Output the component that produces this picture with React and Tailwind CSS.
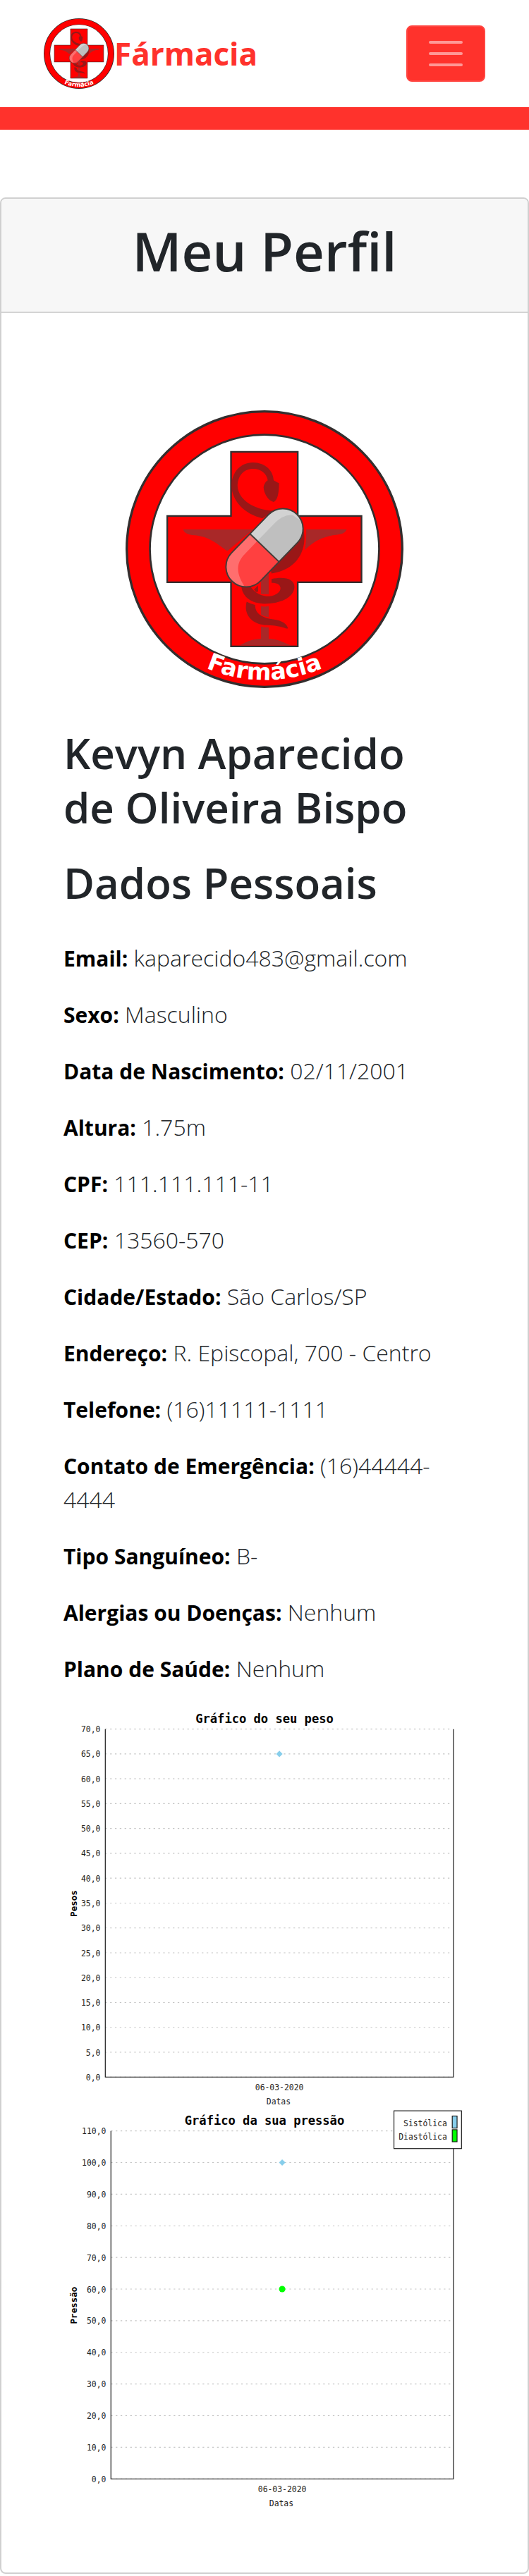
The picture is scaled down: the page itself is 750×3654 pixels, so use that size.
import { useId } from "react";

function Logo({ className }) {
  const id = useId();
  const pill = `${id}-pill`;
  const arc = `${id}-arc`;
  return (
    <svg viewBox="56 67 1186 1186" className={className} role="img" aria-label="Logo da Farmácia">
      <defs>
        <clipPath id={pill}>
          <rect x="-199" y="-86" width="398" height="172" rx="86" />
        </clipPath>
        <path id={arc} d="M330 1133 A640 640 0 0 0 968 1133" />
      </defs>
      <circle cx="649" cy="660" r="539" fill="#fff" stroke="#332e2e" strokeWidth="108" />
      <circle cx="649" cy="660" r="538" fill="none" stroke="#f00" strokeWidth="90" />
      <path
        d="M506 244H791V518H1063V801H791V1075H506V801H234V518H506Z"
        fill="#f00"
        stroke="#332e2e"
        strokeWidth="7"
      />
      <g fill="#a92828">
        <path d="M302 576H600L490 668C440 632 410 604 340 600C318 597 304 588 302 576Z" />
        <path d="M827 576H1000C994 590 980 596 960 598C900 604 860 625 821 664Q828 620 827 576Z" />
        <path d="M634 740H667V852H634ZM634 904Q650 907 667 904V951Q648 948 634 940ZM634 990Q650 994 667 994V1042C720 1046 728 1060 765 1071H540C570 1060 578 1046 634 1042Z" />
      </g>
      <g fill="#991717">
        <path d="M663 366C658 338 636 317 600 317C562 317 535 345 534 390C536 446 600 492 690 497L640 528C560 510 510 450 508 390C510 330 546 291 600 290C650 291 686 322 688 366Q700 374 711 378C711 425 703 454 688 458C666 455 646 422 645 395Q648 376 663 366Z" />
        <path d="M815 575C832 650 800 745 679 764L676 752L740 640Z" />
        <path d="M679 787C735 775 778 787 777 822C773 870 712 893 650 893C592 892 552 862 550 815L590 820C608 848 640 862 670 861C700 858 720 840 717 824C714 808 697 804 679 804Z" />
        <path d="M573 884Q590 894 609 898C608 935 640 955 690 960C725 964 748 982 749 999C730 998 722 985 650 984C585 976 560 930 573 884Z" />
        <path d="M604 832L622 815V841L613 843Z" />
      </g>
      <g transform="translate(649 654) rotate(-46)">
        <g clipPath={`url(#${pill})`}>
          <rect x="-200" y="-90" width="200" height="180" fill="#ff6e6e" />
          <rect x="0" y="-90" width="200" height="180" fill="#d2d2d2" />
          <path d="M0 -42V90H-190C-172 60 -176 -42 -80 -42Z" fill="#ff4040" />
          <path d="M0 -42H100Q160 -42 184 -10L200 90H0Z" fill="#bfbfbf" />
        </g>
        <path d="M0 -86V86" stroke="#443c38" strokeWidth="6" />
        <rect x="-199" y="-86" width="398" height="172" rx="86" fill="none" stroke="#443c38" strokeWidth="6" />
      </g>
      <text
        className="font-['DejaVu_Sans',sans-serif] font-bold"
        fontSize="100"
        fill="#fff"
        textAnchor="middle"
      >
        <textPath href={`#${arc}`} startOffset="50%">
          Farmácia
        </textPath>
      </text>
    </svg>
  );
}

function Chart({ title, yLabel, left, ticks, max, points, date, legend }) {
  const top = 26;
  const bottom = 459;
  const right = 485;
  const y = (v) => bottom - ((bottom - top) * v) / max;
  const cx = (left + right) / 2;
  return (
    <svg
      viewBox="0 0 500 500"
      className="block w-full font-['DejaVu_Sans_Mono',monospace] text-[10px]"
      role="img"
      aria-label={title}
    >
      <text x="250" y="18" textAnchor="middle" className="text-[15px] font-bold">
        {title}
      </text>
      <text transform="translate(17 243) rotate(-90)" textAnchor="middle" className="text-[11px] font-bold">
        {yLabel}
      </text>
      {ticks.map((t) => (
        <g key={t}>
          <line x1={left} x2={right - 4} y1={y(t)} y2={y(t)} stroke="#c4c4c4" strokeDasharray="2 4" />
          <text x={left - 6} y={y(t) + 4} textAnchor="end" fill="#222">
            {t},0
          </text>
        </g>
      ))}
      <path d={`M${left} ${top}V${bottom}H${right}V${top}`} fill="none" stroke="#111" />
      {points.map((p) =>
        p.shape === "diamond" ? (
          <path key={p.value} d={`M${cx} ${y(p.value) - 4}l4 4l-4 4l-4 -4Z`} fill={p.color} />
        ) : (
          <circle key={p.value} cx={cx} cy={y(p.value)} r="4" fill={p.color} />
        )
      )}
      <text x={cx} y="475" textAnchor="middle" fill="#222">
        {date}
      </text>
      <text x={cx - 1} y="493" textAnchor="middle" fill="#222">
        Datas
      </text>
      {legend && (
        <g>
          <rect x="411" y="1" width="84" height="47" fill="#fff" stroke="#111" />
          {legend.map((l, i) => (
            <g key={l.label}>
              <text x="477" y={20 + i * 17} textAnchor="end" fill="#222">
                {l.label}
              </text>
              <rect x="483.5" y={7.5 + i * 17} width="6" height="15" fill={l.color} stroke="#111" />
            </g>
          ))}
        </g>
      )}
    </svg>
  );
}

const details = [
  ["Email", "kaparecido483@gmail.com"],
  ["Sexo", "Masculino"],
  ["Data de Nascimento", "02/11/2001"],
  ["Altura", "1.75m"],
  ["CPF", "111.111.111-11"],
  ["CEP", "13560-570"],
  ["Cidade/Estado", "São Carlos/SP"],
  ["Endereço", "R. Episcopal, 700 - Centro"],
  ["Telefone", "(16)11111-1111"],
  ["Contato de Emergência", "(16)44444-4444"],
  ["Tipo Sanguíneo", "B-"],
  ["Alergias ou Doenças", "Nenhum"],
  ["Plano de Saúde", "Nenhum"],
];

const weightTicks = [70, 65, 60, 55, 50, 45, 40, 35, 30, 25, 20, 15, 10, 5, 0];
const pressureTicks = [110, 100, 90, 80, 70, 60, 50, 40, 30, 20, 10, 0];

export default function App() {
  return (
    <div className="bg-white font-['Open_Sans',sans-serif] text-[#212529]">
      <header className="flex items-center justify-between border-b-32 border-[#ff322c] px-[62px] py-[26px]">
        <a href="#" className="flex items-center text-[44px] leading-[72px] font-bold text-[#ff322c]">
          <Logo className="size-[100px]" />
          Fármacia
        </a>
        <button
          type="button"
          aria-label="Abrir menu"
          className="flex h-20 w-28 flex-col items-center justify-center gap-3 rounded-lg border-2 border-[#ff4540] bg-[#ff322c]"
        >
          <span className="h-1 w-12 rounded-full bg-[#ff9896]" />
          <span className="h-1 w-12 rounded-full bg-[#ff9896]" />
          <span className="h-1 w-12 rounded-full bg-[#ff9896]" />
        </button>
      </header>

      <main className="pt-24">
        <section className="rounded-lg border-2 border-[#d0d0d0]">
          <div className="rounded-t-md border-b-2 border-[#d4d4d4] bg-[#f7f7f7] pt-[26px] pb-[38px] text-center">
            <h1 className="text-[76px] leading-24 font-semibold">Meu Perfil</h1>
          </div>
          <div className="px-[88px] pt-[138px] pb-[86px]">
            <Logo className="mx-auto size-[394px]" />
            <h2 className="mt-[54px] text-[60px] leading-[77px] font-semibold">
              Kevyn Aparecido
              <br />
              de Oliveira Bispo
            </h2>
            <h2 className="mt-[30px] text-[60px] leading-[77px] font-semibold">Dados Pessoais</h2>
            <div className="mt-11 mb-8 flex flex-col gap-8 text-[32px] leading-12 font-light">
              {details.map(([label, value]) => (
                <p key={label}>
                  <strong className="text-[30px] leading-none font-bold text-black">{label}:</strong> {value}
                </p>
              ))}
            </div>
            <Chart
              title="Gráfico do seu peso"
              yLabel="Pesos"
              left={52}
              ticks={weightTicks}
              max={70}
              date="06-03-2020"
              points={[{ value: 65, shape: "diamond", color: "#87ceeb" }]}
            />
            <Chart
              title="Gráfico da sua pressão"
              yLabel="Pressão"
              left={59}
              ticks={pressureTicks}
              max={110}
              date="06-03-2020"
              points={[
                { value: 100, shape: "diamond", color: "#87ceeb" },
                { value: 60, shape: "circle", color: "#00ff00" },
              ]}
              legend={[
                { label: "Sistólica", color: "#87ceeb" },
                { label: "Diastólica", color: "#00ff00" },
              ]}
            />
          </div>
        </section>
      </main>
    </div>
  );
}
